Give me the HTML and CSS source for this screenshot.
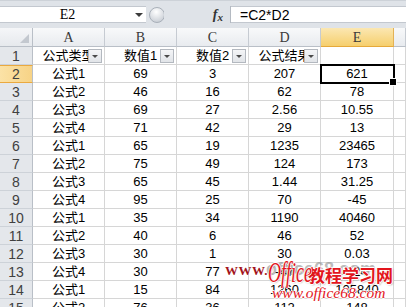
FILE: index.html
```html
<!DOCTYPE html>
<html lang="zh-CN">
<head>
    <meta charset="UTF-8">
    <title>公式结果</title>
    <link rel="stylesheet" href="styles.css">
</head>
<body>
    <div class="formula-bar">
        <div class="name-box">
            <span class="name">E2</span>
            <span class="drop"></span>
        </div>
        <div class="knob">
            <svg width="16" height="18" viewBox="0 0 16 18">
                <defs>
                    <radialGradient id="kg" cx="0.45" cy="0.3" r="0.7">
                        <stop offset="0" stop-color="#ffffff"/>
                        <stop offset="1" stop-color="#c9ced5"/>
                    </radialGradient>
                </defs>
                <circle cx="9" cy="9" r="7.5" fill="url(#kg)" stroke="#a9b0b9"/>
            </svg>
        </div>
        <div class="fx"><i>f</i><i class="x">x</i></div>
        <div class="formula">=C2*D2</div>
    </div>

    <div class="sheet">
        <div class="corner"><span class="tri"></span></div>
        <div class="col-head">A</div>
        <div class="col-head">B</div>
        <div class="col-head">C</div>
        <div class="col-head">D</div>
        <div class="col-head sel">E</div>
        <div class="col-head last"></div>

        <div class="row-head">1</div>
        <div class="cell">公式类型<span class="filter"></span></div>
        <div class="cell">数值1<span class="filter"></span></div>
        <div class="cell">数值2<span class="filter"></span></div>
        <div class="cell">公式结果<span class="filter"></span></div>
        <div class="cell"></div>
        <div class="cell"></div>

        <div class="row-head sel">2</div>
        <div class="cell">公式1</div><div class="cell">69</div><div class="cell">3</div><div class="cell">207</div><div class="cell active">621</div><div class="cell"></div>

        <div class="row-head">3</div>
        <div class="cell">公式2</div><div class="cell">46</div><div class="cell">16</div><div class="cell">62</div><div class="cell">78</div><div class="cell"></div>

        <div class="row-head">4</div>
        <div class="cell">公式3</div><div class="cell">69</div><div class="cell">27</div><div class="cell">2.56</div><div class="cell">10.55</div><div class="cell"></div>

        <div class="row-head">5</div>
        <div class="cell">公式4</div><div class="cell">71</div><div class="cell">42</div><div class="cell">29</div><div class="cell">13</div><div class="cell"></div>

        <div class="row-head">6</div>
        <div class="cell">公式1</div><div class="cell">65</div><div class="cell">19</div><div class="cell">1235</div><div class="cell">23465</div><div class="cell"></div>

        <div class="row-head">7</div>
        <div class="cell">公式2</div><div class="cell">75</div><div class="cell">49</div><div class="cell">124</div><div class="cell">173</div><div class="cell"></div>

        <div class="row-head">8</div>
        <div class="cell">公式3</div><div class="cell">65</div><div class="cell">45</div><div class="cell">1.44</div><div class="cell">31.25</div><div class="cell"></div>

        <div class="row-head">9</div>
        <div class="cell">公式4</div><div class="cell">95</div><div class="cell">25</div><div class="cell">70</div><div class="cell">-45</div><div class="cell"></div>

        <div class="row-head">10</div>
        <div class="cell">公式1</div><div class="cell">35</div><div class="cell">34</div><div class="cell">1190</div><div class="cell">40460</div><div class="cell"></div>

        <div class="row-head">11</div>
        <div class="cell">公式2</div><div class="cell">40</div><div class="cell">6</div><div class="cell">46</div><div class="cell">52</div><div class="cell"></div>

        <div class="row-head">12</div>
        <div class="cell">公式3</div><div class="cell">30</div><div class="cell">1</div><div class="cell">30</div><div class="cell">0.03</div><div class="cell"></div>

        <div class="row-head">13</div>
        <div class="cell">公式4</div><div class="cell">30</div><div class="cell">77</div><div class="cell">-47</div><div class="cell">124</div><div class="cell"></div>

        <div class="row-head">14</div>
        <div class="cell">公式1</div><div class="cell">15</div><div class="cell">84</div><div class="cell">1260</div><div class="cell">105840</div><div class="cell"></div>

        <div class="row-head">15</div>
        <div class="cell">公式2</div><div class="cell">76</div><div class="cell">36</div><div class="cell">112</div><div class="cell">148</div><div class="cell"></div>
    </div>

    <!-- site watermark stamped over the sheet -->
    <div class="watermark">
        <span class="wm-www">WWW.</span>
        <span class="wm-ghost">office68.com</span>
        <div class="wm-logo">
            <span class="wm-office">Office</span><span class="wm-cn">教程学习网</span>
        </div>
        <div class="wm-url">www.office68.com</div>
    </div>
</body>
</html>
```

FILE: styles.css
```css
* {
    margin: 0;
    padding: 0;
    box-sizing: border-box;
}

body {
    width: 406px;
    height: 307px;
    overflow: hidden;
    position: relative;
    background: #fff;
    font-family: "Liberation Sans", "Noto Sans CJK SC", sans-serif;
    font-size: 13px;
    color: #000;
}

/* formula bar */
.formula-bar {
    display: flex;
    height: 28px;
    padding: 5px 0;
    background: #dfe3e8;
    border-top: 1px solid #cdd2d8;
}

.name-box {
    width: 146px;
    display: flex;
    align-items: center;
    background: #fff;
    border-top: 1px solid #c3c8cf;
    border-bottom: 1px solid #c3c8cf;
}

.name {
    flex: 1;
    text-align: center;
    font-family: "Liberation Serif", serif;
    font-size: 14px;
}

.drop {
    width: 0;
    height: 0;
    margin-right: 3px;
    border-left: 4px solid transparent;
    border-right: 4px solid transparent;
    border-top: 4px solid #3c3c3c;
}

.knob {
    width: 18px;
    display: flex;
    align-items: center;
    margin-left: 2px;
}

.fx {
    width: 65px;
    display: flex;
    align-items: center;
    justify-content: flex-end;
    padding-right: 7px;
    border-right: 1px solid #b4bac2;
    font-family: "Liberation Serif", serif;
    font-weight: bold;
    font-size: 14px;
    color: #333;
}

.fx .x {
    font-size: 11px;
    margin-top: 4px;
}

.formula {
    flex: 1;
    display: flex;
    align-items: center;
    padding-left: 9px;
    background: #fff;
    border-top: 1px solid #c3c8cf;
    border-bottom: 1px solid #c3c8cf;
    font-size: 14px;
}

/* sheet grid */
.sheet {
    display: grid;
    grid-template-columns: 33px 72px 72px 72px 72px 73px 1fr;
    grid-template-rows: 19px;
    grid-auto-rows: 18px;
}

.cell {
    position: relative;
    display: flex;
    align-items: center;
    justify-content: center;
    white-space: nowrap;
    overflow: hidden;
    border-right: 1px solid #d6d6d6;
    border-bottom: 1px solid #d6d6d6;
    line-height: 17px;
}

.corner,
.col-head,
.row-head {
    display: flex;
    align-items: center;
    justify-content: center;
    font-family: "Liberation Serif", serif;
    font-size: 14px;
    color: #3a3a3a;
}

.corner {
    position: relative;
    background: linear-gradient(#f5f6f8, #e6e9ed);
    border-right: 1px solid #b9bfc7;
    border-bottom: 1px solid #b9bfc7;
}

.corner .tri {
    position: absolute;
    right: 3px;
    bottom: 3px;
    width: 0;
    height: 0;
    border-left: 9px solid transparent;
    border-bottom: 9px solid #c3c8cf;
}

.col-head {
    padding-top: 2px;
    background: linear-gradient(#f8f9fa, #e8ebef);
    border-right: 1px solid #c6cbd2;
    border-bottom: 1px solid #b9bfc7;
}

.col-head.sel {
    background: linear-gradient(#fbe7b2, #f6cf6d);
    border-right-color: #e3b256;
    border-bottom-color: #e6a93a;
}

.row-head {
    font-family: "Liberation Sans", sans-serif;
    font-size: 14px;
    background: #e4e7eb;
    border-right: 1px solid #b9bfc7;
    border-bottom: 1px solid #cdd2d8;
    color: #404040;
}

.row-head.sel {
    background: linear-gradient(90deg, #fbe2a6, #f7d386);
    border-top: 1px solid #eaa93f;
    border-bottom-color: #eaa93f;
}

.filter {
    position: absolute;
    right: 2px;
    top: 2px;
    width: 14px;
    height: 14px;
    background: linear-gradient(#f4f5f7, #e1e4e8);
    border: 1px solid #b3b8bf;
}

.filter::after {
    content: "";
    position: absolute;
    left: 3px;
    top: 5px;
    border-left: 3px solid transparent;
    border-right: 3px solid transparent;
    border-top: 3px solid #4a4a4a;
}

.active {
    overflow: visible;
    z-index: 1;
    outline: 2px solid #000;
    outline-offset: -1px;
}

.active::after {
    content: "";
    position: absolute;
    right: -4px;
    bottom: -4px;
    width: 6px;
    height: 6px;
    background: #000;
    border: 1px solid #fff;
}

/* watermark */
.watermark {
    position: absolute;
    left: 224px;
    top: 256px;
    width: 182px;
    height: 48px;
    z-index: 2;
}

.wm-www {
    position: absolute;
    left: 1px;
    top: 8px;
    font-family: "Liberation Serif", serif;
    font-weight: bold;
    font-size: 13px;
    line-height: 14px;
    letter-spacing: 0.5px;
    color: #a3141b;
}

.wm-ghost {
    position: absolute;
    left: 42px;
    top: 3px;
    font-family: "Liberation Sans", sans-serif;
    font-weight: bold;
    font-size: 18px;
    line-height: 20px;
    color: rgba(130, 130, 130, 0.55);
}

.wm-logo {
    position: absolute;
    left: 44px;
    top: 1px;
    display: flex;
    align-items: baseline;
    color: #e3161d;
    text-shadow: 1px 0 #fff, -1px 0 #fff, 0 1px #fff, 0 -1px #fff, 1px 1px 2px rgba(0, 0, 0, 0.35);
}

.wm-office {
    display: inline-block;
    font-family: "Liberation Serif", serif;
    font-style: italic;
    font-size: 30px;
    line-height: 30px;
    transform: scaleX(0.6);
    transform-origin: left;
    width: 40px;
}

.wm-cn {
    font-family: "Noto Sans CJK SC", sans-serif;
    font-weight: bold;
    font-size: 17px;
    line-height: 30px;
}

.wm-url {
    position: absolute;
    left: 48px;
    top: 28px;
    font-family: "Liberation Serif", serif;
    font-style: italic;
    font-size: 15.5px;
    line-height: 17px;
    color: #e3161d;
    text-shadow: 1px 0 #fff, -1px 0 #fff, 0 1px #fff, 0 -1px #fff;
}
```
